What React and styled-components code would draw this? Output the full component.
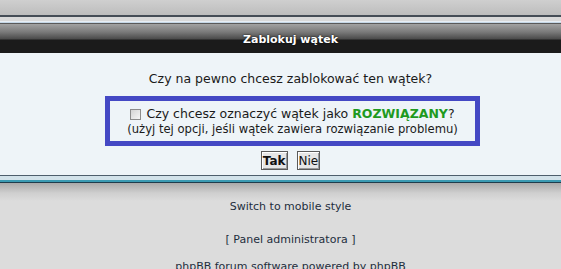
import React from "react";
import styled, { createGlobalStyle } from "styled-components";

const GlobalStyle = createGlobalStyle`
  html, body {
    margin: 0;
    padding: 0;
    background: #dcdcdc;
    font-family: "DejaVu Sans", Verdana, sans-serif;
    overflow: hidden;
  }
`;

const Page = styled.div`
  width: 561px;
  height: 269px;
  overflow: hidden;
  background: #dcdcdc;
`;

const TopStrip = styled.div`
  height: 15px;
  background: linear-gradient(#cfcfcf, #bdbdbd);
  border-bottom: 2px solid #454d56;
`;

const TopBand = styled.div`
  height: 5px;
  background: #d9d9d9;
  border-bottom: 1px solid #c4d6e6;
  box-shadow: inset 0 -1px 0 #e8eef4;
`;

const HeaderBar = styled.div`
  height: 30px;
  box-sizing: border-box;
  border-top: 1px solid #5a5a5a;
  background: linear-gradient(#a2a2a2 0px, #7a7a7a 8px, #4a4a4a 15px, #1b1b1b 16px, #1b1b1b 29px);
  display: flex;
  align-items: center;
  justify-content: center;
  padding: 2px 0 0 20px;
  color: #ffffff;
  font-size: 11px;
  font-weight: bold;
  text-shadow: 0 0 2px #000;
`;

const Panel = styled.div`
  background: #eef4f8;
  padding: 18px 0 5px;
  border-bottom: 1px solid #4e5e6c;
`;

const Question = styled.div`
  text-align: center;
  padding-left: 20px;
  font-size: 12.5px;
  line-height: 16px;
  color: #1a1a1a;
`;

const SolvedBox = styled.div`
  margin: 9px 0 0 105px;
  width: 375px;
  box-sizing: border-box;
  border: 5px solid #4448c4;
  padding: 5px 0 4px;
  text-align: center;
  color: #1a1a1a;
`;

const CheckRow = styled.label`
  display: flex;
  align-items: center;
  justify-content: center;
  gap: 5px;
  font-size: 12.5px;
  line-height: 16px;
`;

const Check = styled.input`
  appearance: none;
  margin: 0;
  width: 11px;
  height: 11px;
  border: 1px solid #8c8c8c;
  background: linear-gradient(135deg, #d4d4d4, #f6f6f6);
  box-sizing: border-box;
`;

const Solved = styled.strong`
  color: #1f9a1f;
`;

const Hint = styled.div`
  font-size: 11.6px;
  line-height: 15px;
`;

const Buttons = styled.div`
  display: flex;
  justify-content: center;
  gap: 9px;
  margin-top: 5px;
  padding-left: 20px;
`;

const Button = styled.button`
  height: 19px;
  padding: 0 1px;
  border: 1px solid #5a5a5a;
  box-shadow: inset 1px 1px 0 #ffffff, inset -1px -1px 0 #9a9a9a;
  background: #e6e6e6;
  font-family: inherit;
  font-size: 12px;
  font-weight: ${(p) => (p.$primary ? "bold" : "normal")};
  color: #111;
`;

const BottomEdge = styled.div`
  height: 4px;
  background: #d2e2ea;
  border-bottom: 2px solid #3a9ab2;
`;

const BottomShade = styled.div`
  height: 1px;
  background: #1f3d4c;
`;

const Footer = styled.div`
  background: linear-gradient(#a9a9a9 0px, #cfcfcf 10px, #dcdcdc 18px);
  padding: 17px 0 0 20px;
  text-align: center;
  font-size: 11px;
  color: #1e2e3c;
`;

const FooterLine = styled.div`
  margin-top: ${(p) => p.$gap || 0}px;
  line-height: 14px;
`;

const FooterLink = styled.a`
  color: #1e2e3c;
  text-decoration: none;
`;

export default function App() {
  return (
    <Page>
      <GlobalStyle />
      <TopStrip />
      <TopBand />
      <HeaderBar>Zablokuj wątek</HeaderBar>
      <Panel>
        <Question>Czy na pewno chcesz zablokować ten wątek?</Question>
        <SolvedBox>
          <CheckRow>
            <Check type="checkbox" />
            <span>
              Czy chcesz oznaczyć wątek jako <Solved>ROZWIĄZANY</Solved>?
            </span>
          </CheckRow>
          <Hint>(użyj tej opcji, jeśli wątek zawiera rozwiązanie problemu)</Hint>
        </SolvedBox>
        <Buttons>
          <Button $primary>Tak</Button>
          <Button>Nie</Button>
        </Buttons>
      </Panel>
      <BottomEdge />
      <BottomShade />
      <Footer>
        <FooterLine>
          <FooterLink href="#">Switch to mobile style</FooterLink>
        </FooterLine>
        <FooterLine $gap={19}>
          [ <FooterLink href="#">Panel administratora</FooterLink> ]
        </FooterLine>
        <FooterLine $gap={13}>
          phpBB forum software powered by <FooterLink href="#">phpBB</FooterLink>
        </FooterLine>
      </Footer>
    </Page>
  );
}
